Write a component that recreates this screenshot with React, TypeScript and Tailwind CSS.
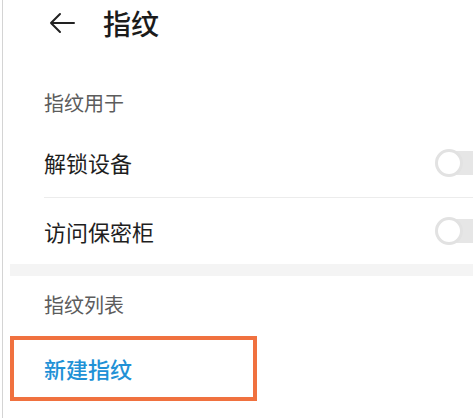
const FONT = "font-['Noto_Sans_CJK_SC','Noto_Sans',sans-serif]";

function Toggle() {
  return (
    <div className="relative ml-auto mr-[-18px] h-[28px] w-[56px] shrink-0">
      <div className="absolute left-[5px] right-0 top-[2px] h-[24px] rounded-full bg-[#e6e6e6]" />
      <div className="absolute left-0 top-0 h-[28px] w-[28px] rounded-full border-[3px] border-[#e2e2e2] bg-white" />
    </div>
  );
}

export default function App() {
  return (
    <div className={`h-[418px] w-[473px] overflow-hidden bg-white ${FONT}`}>
      <div className="ml-[2px] flex h-full flex-col border-l border-[#d4d4d4]">
        <div className="flex h-[46px] items-center pl-[45px]">
          <svg width="28" height="24" viewBox="0 0 28 24" fill="none" stroke="#222" strokeWidth="2" strokeLinecap="round" strokeLinejoin="round">
            <path d="M26 12H3M12 3L3 12L12 21" />
          </svg>
          <span className="ml-[27px] text-[28px] font-medium leading-none text-[#1b1b1b]">指纹</span>
        </div>

        <div className="mt-[32px] flex h-[50px] items-center pl-[41px] text-[20px] text-[#5c5c5c]">指纹用于</div>

        <div className="ml-[41px] flex h-[70px] items-center border-b border-[#ececec] text-[22px] text-[#1e1e1e]">
          <span>解锁设备</span>
          <Toggle />
        </div>
        <div className="ml-[41px] flex h-[66px] items-center text-[22px] text-[#1e1e1e]">
          <span>访问保密柜</span>
          <Toggle />
        </div>

        <div className="ml-[7px] h-[12px] bg-[#f4f4f4]" />

        <div className="flex h-[58px] items-center pl-[41px] text-[20px] text-[#5c5c5c]">指纹列表</div>

        <div className="ml-[7px] mt-[2px] flex h-[65px] w-[247px] items-center border-4 border-[#f0713f] pl-[30px] text-[22px] font-medium text-[#2191d6]">
          新建指纹
        </div>
      </div>
    </div>
  );
}
